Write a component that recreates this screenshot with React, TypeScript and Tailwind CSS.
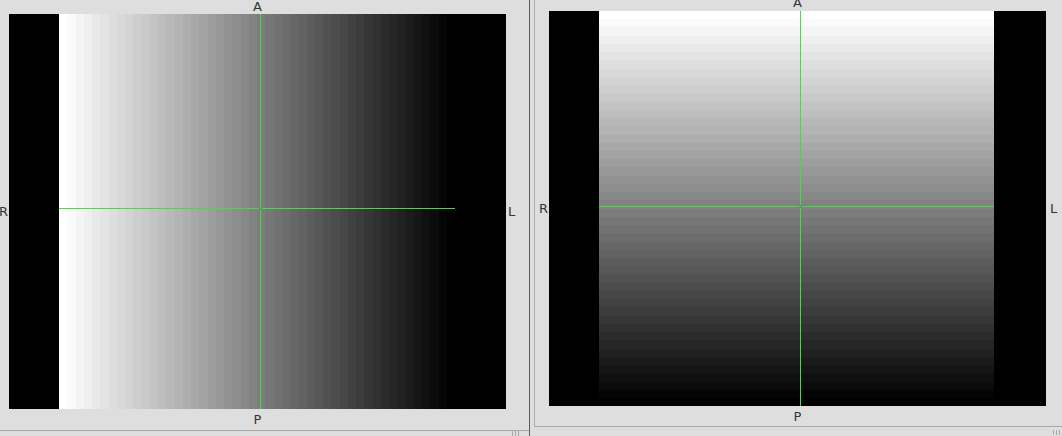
import React from "react";

const BANDS = 48;

function bandShades() {
  const shades: string[] = [];
  for (let i = 0; i < BANDS; i++) {
    const v = Math.round(255 * (1 - i / (BANDS - 1)));
    shades.push(`rgb(${v},${v},${v})`);
  }
  return shades;
}

function Grip() {
  return (
    <div className="flex gap-[2px] items-end h-[5px]">
      <div className="w-px h-full bg-[#a9a9a9]" />
      <div className="w-px h-full bg-[#a9a9a9]" />
      <div className="w-px h-full bg-[#a9a9a9]" />
    </div>
  );
}

function Slice({
  vertical,
  rampWidth,
  crossY,
}: {
  vertical?: boolean;
  rampWidth: number;
  crossY: number;
}) {
  const shades = bandShades();
  return (
    <div className="relative flex w-[497px] h-[395px] bg-black">
      <div className="w-[50px] h-full bg-black" />
      {/* stepped ramp */}
      <div
        className={`flex h-full ${vertical ? "flex-col" : "flex-row"}`}
        style={{ width: rampWidth }}
      >
        {shades.map((c, i) => (
          <div key={i} className="flex-1" style={{ backgroundColor: c }} />
        ))}
      </div>
      <div className="flex-1 h-full bg-black" />

      {/* crosshair */}
      <svg
        className="absolute inset-0 z-10 pointer-events-none"
        width={497}
        height={395}
        shapeRendering="crispEdges"
      >
        <rect x={251} y={0} width={1} height={395} fill="#3be23b" />
        <rect x={50} y={crossY} width={rampWidth} height={1} fill="#3be23b" />
        <rect x={250} y={crossY - 1} width={3} height={3} fill="#7a8a7a" />
      </svg>
    </div>
  );
}

export default function App() {
  return (
    <div
      className="flex w-[1062px] h-[436px] bg-[#dedede] overflow-hidden"
      style={{ fontFamily: '"DejaVu Sans", "Liberation Sans", sans-serif' }}
    >
      {/* left view */}
      <div className="flex flex-col w-[529px] h-full">
        <div className="flex-1 pt-[14px] pl-[9px]">
          <div className="grid grid-cols-[497px_23px] grid-rows-[395px_21px] text-[13px] leading-none text-[#333] relative">
            <Slice rampWidth={396} crossY={194} />
            <div className="flex items-center pl-[2px]">L</div>
            <div className="flex justify-center items-center pb-[1px]">P</div>
            <div />
            <div className="absolute -top-[14px] left-0 w-[497px] h-[12px] flex justify-center items-center">A</div>
            <div className="absolute top-0 -left-[9px] w-[9px] h-[395px] flex items-center">
              <span className="-ml-[1px]">R</span>
            </div>
          </div>
        </div>
        <div className="h-px bg-[#ababab]" />
        <div className="h-[5px] flex justify-end pr-[10px]">
          <Grip />
        </div>
      </div>

      {/* splitter */}
      <div className="w-px h-full bg-[#5c5c5c]" />
      <div className="w-[4px] h-full" />

      {/* right view */}
      <div className="flex flex-col flex-1 h-full">
        <div className="flex flex-1 border-l border-b border-[#ababab]">
          <div className="pt-[11px] pl-[14px] text-[13px] leading-none text-[#333]">
            <div className="relative">
              <Slice vertical rampWidth={395} crossY={195} />
              <div className="absolute -top-[13px] left-0 w-[497px] h-[11px] flex justify-center items-end">A</div>
              <div className="absolute top-0 -left-[11px] w-[11px] h-[395px] flex items-center justify-center">R</div>
              <div className="absolute top-0 left-[497px] w-[16px] h-[395px] flex items-center pl-[4px]">L</div>
              <div className="absolute top-[395px] left-0 w-[497px] h-[20px] flex justify-center items-center">P</div>
            </div>
          </div>
        </div>
        <div className="h-[9px] flex justify-end pr-[2px] pt-[3px]">
          <Grip />
        </div>
      </div>
    </div>
  );
}
